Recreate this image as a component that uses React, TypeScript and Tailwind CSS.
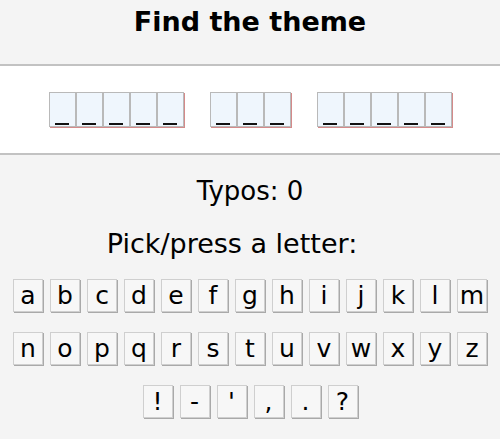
const words = [5, 3, 5];
const rows = ["abcdefghijklm".split(""), "nopqrstuvwxyz".split(""), ["!", "-", "'", ",", ".", "?"]];

function Tile() {
  return (
    <div className="w-[27px] h-[35px] bg-[#eff6fd] border border-[#b9b9b9] flex items-end justify-center pb-[1px]">
      <div className="w-[14px] h-[2px] bg-[#111]" />
    </div>
  );
}

function Key({ ch }: { ch: string }) {
  return (
    <button className="w-[30px] h-[33px] bg-[#f7f7f7] border border-[#cfcfcf] shadow-[1px_1px_0_#a9a9a9] text-[25px] leading-[30px] text-black flex items-center justify-center">
      {ch}
    </button>
  );
}

export default function App() {
  return (
    <main className="w-[500px] h-[439px] bg-[#f4f4f4] font-['DejaVu_Sans',sans-serif] text-black overflow-hidden">
      <header className="h-[64px] pt-[6px]">
        <h1 className="text-center text-[27px] leading-[32px] font-bold">Find the theme</h1>
      </header>
      <section className="h-[91px] bg-white border-y-2 border-[#c2c2c2] flex items-center justify-center gap-[26px]">
        {words.map((n, i) => (
          <div key={i} className="flex shadow-[1px_1px_0_#d48a8a]">
            {Array.from({ length: n }).map((_, j) => (
              <Tile key={j} />
            ))}
          </div>
        ))}
      </section>
      <p className="mt-[21px] text-center text-[26px] leading-[30px]">Typos: 0</p>
      <p className="mt-[23px] pr-[36px] text-center text-[27px] leading-[30px]">Pick/press a letter:</p>
      <div className="mt-[20px] flex flex-col items-center gap-[20px]">
        {rows.map((r, i) => (
          <div key={i} className="flex gap-[7px]">
            {r.map((ch) => (
              <Key key={ch} ch={ch} />
            ))}
          </div>
        ))}
      </div>
    </main>
  );
}
